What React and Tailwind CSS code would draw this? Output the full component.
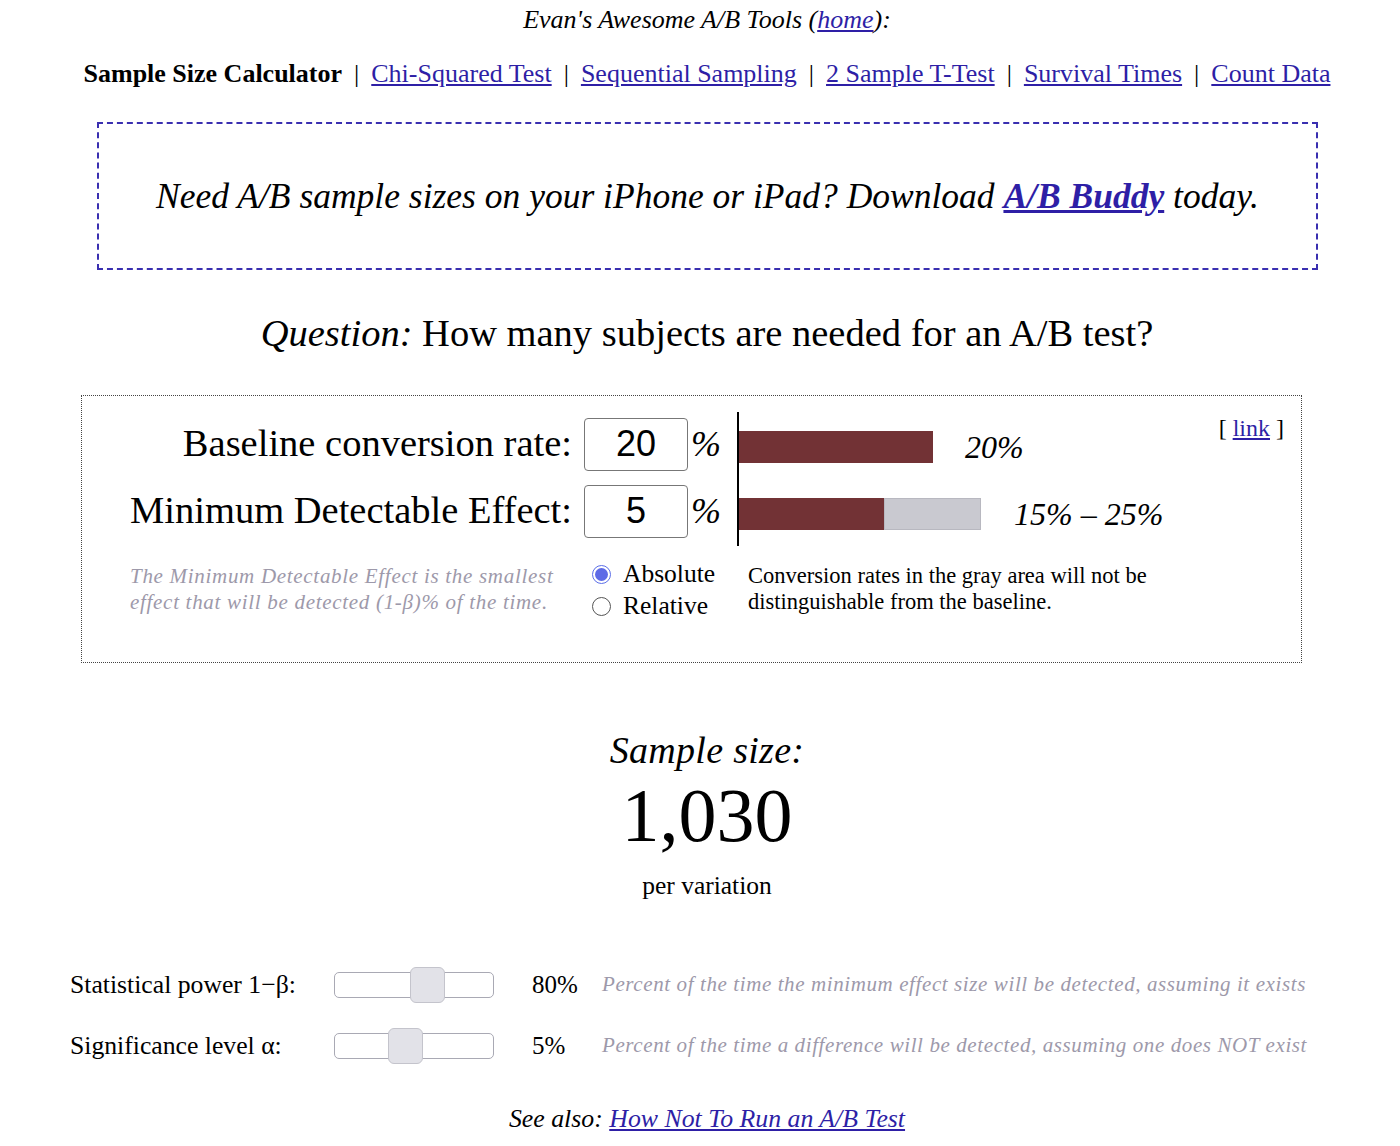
import { useState } from 'react';

const SERIF = 'font-["Liberation_Serif","Times_New_Roman",serif]';
const LINK = 'text-[#2e1fa6] underline';

function Slider({ left }) {
  return (
    <div className="relative w-[160px] h-[26px] rounded-[5px] border border-[#a9a9b4] bg-white">
      <div
        className="absolute top-[-6px] w-[35px] h-[36px] rounded-[6px] border border-[#c4c4cc] bg-[#e2e2e8]"
        style={{ left }}
      />
    </div>
  );
}

function Radio({ checked, label }) {
  return (
    <label className="flex items-center h-[32px]">
      <span
        className={`w-[19px] h-[19px] rounded-full border flex items-center justify-center ${
          checked ? 'border-[#5b6ee8] bg-white' : 'border-[#555] bg-white'
        }`}
      >
        {checked && <span className="w-[13px] h-[13px] rounded-full bg-[#5d6ae6]" />}
      </span>
      <span className="ml-[12px] text-[25.5px]">{label}</span>
    </label>
  );
}

export default function App() {
  const [power] = useState(80);
  const [alpha] = useState(5);

  return (
    <div className={`${SERIF} bg-white text-black w-[1400px] min-h-[1146px]`}>
      {/* header */}
      <p className="pt-[5px] text-center italic text-[26px] leading-[30px] pl-[14px]">
        Evan's Awesome A/B Tools (<a className={LINK} href="#">home</a>):
      </p>

      <nav className="mt-[24px] flex justify-center items-center text-[26px] leading-[30px] pl-[14px]">
        <span className="font-bold">Sample Size Calculator</span>
        <span className="mx-[12px]">|</span>
        <a className={LINK} href="#">Chi-Squared Test</a>
        <span className="mx-[12px]">|</span>
        <a className={LINK} href="#">Sequential Sampling</a>
        <span className="mx-[12px]">|</span>
        <a className={LINK} href="#">2 Sample T-Test</a>
        <span className="mx-[12px]">|</span>
        <a className={LINK} href="#">Survival Times</a>
        <span className="mx-[12px]">|</span>
        <a className={LINK} href="#">Count Data</a>
      </nav>

      {/* promo */}
      <div className="ml-[97px] mt-[33px] w-[1221px] h-[148px] border-2 border-dashed border-[#3a2fb0] flex items-center justify-center">
        <p className="italic text-[35.5px] pt-[2px]">
          Need A/B sample sizes on your iPhone or iPad? Download{' '}
          <a className={`${LINK} font-bold`} href="#">A/B Buddy</a> today.
        </p>
      </div>

      <h1 className="mt-[40px] text-center text-[38.5px] leading-[46px] pl-[14px]">
        <span className="italic">Question:</span> How many subjects are needed for an A/B test?
      </h1>

      {/* calculator box */}
      <div className="ml-[81px] mt-[39px] w-[1221px] h-[268px] border border-dotted border-[#444] relative pt-[16px]">
        <a className="absolute top-[14px] right-[17px] text-[24px]" href="#">
          [ <span className={LINK}>link</span> ]
        </a>

        <div className="flex">
          <div className="w-[639px] pt-[6px] flex flex-col gap-[15px]">
            <div className="flex items-center justify-end h-[52px]">
              <span className="text-[38.5px] mr-[12px]">Baseline conversion rate:</span>
              <div className="w-[104px] h-[53px] border border-[#777] rounded-[4px] flex items-center justify-center font-['Liberation_Sans',Arial,sans-serif] text-[36px]">
                20
              </div>
              <span className="italic text-[36px] ml-[3px] w-[30px]">%</span>
            </div>
            <div className="flex items-center justify-end h-[52px]">
              <span className="text-[38.5px] mr-[12px]">Minimum Detectable Effect:</span>
              <div className="w-[104px] h-[53px] border border-[#777] rounded-[4px] flex items-center justify-center font-['Liberation_Sans',Arial,sans-serif] text-[36px]">
                5
              </div>
              <span className="italic text-[36px] ml-[3px] w-[30px]">%</span>
            </div>
          </div>

          <div className="ml-[16px] h-[134px] border-l-2 border-black flex flex-col pt-[19px] gap-[35px]">
            <div className="flex items-center">
              <div className="w-[194px] h-[32px] bg-[#723235]" />
              <span className="ml-[32px] italic text-[32px] leading-[32px]">20%</span>
            </div>
            <div className="flex items-center">
              <div className="w-[145px] h-[32px] bg-[#723235]" />
              <div className="w-[97px] h-[32px] bg-[#c9c9d0] border border-[#b8b8c0]" />
              <span className="ml-[33px] italic text-[32px] leading-[32px]">15% – 25%</span>
            </div>
          </div>
        </div>

        <div className="flex mt-[15px]">
          <p className="ml-[48px] mt-[2px] w-[455px] italic text-[21px] leading-[26px] text-[#9d99aa] tracking-[0.7px]">
            The Minimum Detectable Effect is the smallest effect that will be detected (1-β)% of the time.
          </p>
          <div className="ml-[7px] -mt-[3px] flex flex-col">
            <Radio checked label="Absolute" />
            <Radio label="Relative" />
          </div>
          <p className="ml-[33px] mt-[2px] w-[440px] text-[22.5px] leading-[26px]">
            Conversion rates in the gray area will not be distinguishable from the baseline.
          </p>
        </div>
      </div>

      {/* result */}
      <div className="mt-[64px] flex flex-col items-center pl-[14px]">
        <p className="italic text-[38px] leading-[46px] tracking-[0.3px]">Sample size:</p>
        <p className="text-[76px] leading-[84px]">1,030</p>
        <p className="mt-[14px] text-[25.5px] leading-[30px]">per variation</p>
      </div>

      {/* sliders */}
      <div className="mt-[71px] ml-[70px] flex flex-col gap-[35px]">
        <div className="flex items-center h-[26px]">
          <span className="w-[264px] text-[25.7px]">Statistical power 1−β:</span>
          <Slider left={75} />
          <span className="ml-[38px] w-[70px] text-[25px]">{power}%</span>
          <span className="italic text-[21px] text-[#9d99aa] tracking-[0.6px]">
            Percent of the time the minimum effect size will be detected, assuming it exists
          </span>
        </div>
        <div className="flex items-center h-[26px]">
          <span className="w-[264px] text-[25.7px]">Significance level α:</span>
          <Slider left={53} />
          <span className="ml-[38px] w-[70px] text-[25px]">{alpha}%</span>
          <span className="italic text-[21px] text-[#9d99aa] tracking-[0.6px]">
            Percent of the time a difference will be detected, assuming one does NOT exist
          </span>
        </div>
      </div>

      <p className="mt-[41px] text-center italic text-[25.8px] pl-[14px]">
        See also: <a className={LINK} href="#">How Not To Run an A/B Test</a>
      </p>
    </div>
  );
}
